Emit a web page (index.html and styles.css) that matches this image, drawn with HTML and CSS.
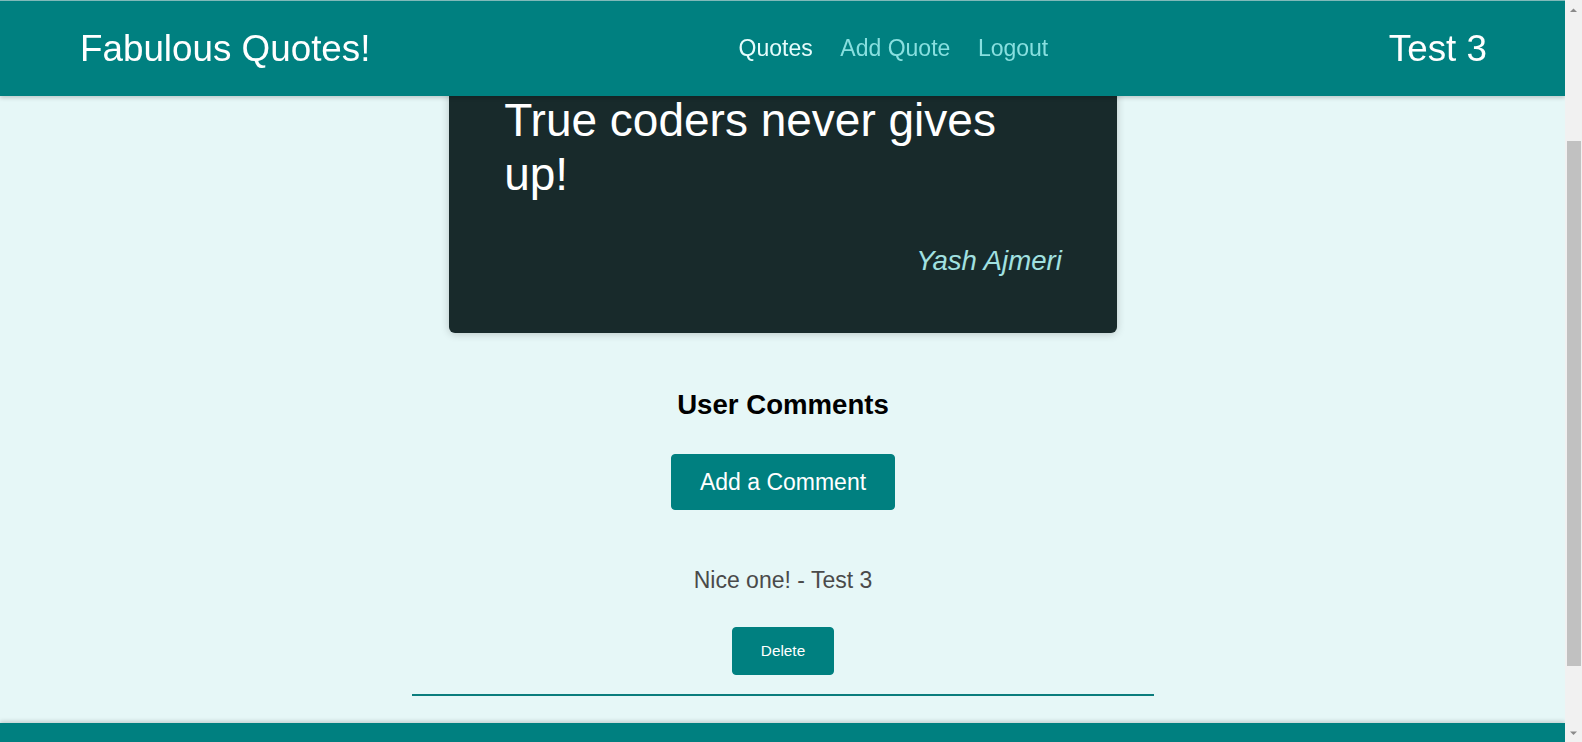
FILE: index.html
```html
<!DOCTYPE html>
<html lang="en">
<head>
<meta charset="utf-8">
<title>Fabulous Quotes!</title>
<link rel="stylesheet" href="styles.css">
</head>
<body>
<header class="header">
  <div class="logo">Fabulous Quotes!</div>
  <nav class="nav">
    <ul class="nav-list">
      <li class="nav-item"><a class="nav-link active" href="#">Quotes</a></li>
      <li class="nav-item"><a class="nav-link" href="#">Add Quote</a></li>
      <li class="nav-item"><a class="nav-link" href="#">Logout</a></li>
    </ul>
  </nav>
  <div class="user">Test 3</div>
</header>
<main class="main">
  <figure class="quote">
    <p class="quote-text">True coders never gives up!</p>
    <figcaption class="quote-author">Yash Ajmeri</figcaption>
  </figure>
  <section class="comments">
    <h2 class="comments-title">User Comments</h2>
    <button class="btn btn-large" type="button">Add a Comment</button>
    <ul class="comment-list">
      <li class="comment">
        <p class="comment-text">Nice one! - Test 3</p>
        <button class="btn btn-small" type="button">Delete</button>
      </li>
    </ul>
  </section>
</main>
<footer class="footer"></footer>
<div class="scrollbar" aria-hidden="true">
  <div class="sb-button">
    <svg class="sb-arrow" width="17" height="17" viewBox="0 0 17 17"><polygon points="5,12 8.5,8.5 12,12"/></svg>
  </div>
  <div class="sb-track">
    <div class="sb-thumb"></div>
  </div>
  <div class="sb-button">
    <svg class="sb-arrow" width="17" height="17" viewBox="0 0 17 17"><polygon points="5,6.5 12,6.5 8.5,10"/></svg>
  </div>
</div>
<script src="script.js"></script>
</body>
</html>
```
FILE: styles.css
```css
* {
  box-sizing: border-box;
}

html {
  font-family: "Liberation Sans", Arial, sans-serif;
  font-size: 18.4px;
}

body {
  margin: 0 17px 0 0;
  background-color: #e6f7f7;
}

.header {
  position: fixed;
  top: 0;
  left: 0;
  right: 17px;
  z-index: 10;
  height: 96px;
  display: flex;
  align-items: center;
  justify-content: space-between;
  padding: 0 78px 0 80px;
  background-color: #008080;
  border-top: 1px solid #80b9b9;
  box-shadow: 0 2px 4px rgba(0, 0, 0, 0.18);
}

.logo {
  font-size: 36.8px;
  color: #ffffff;
}

.nav-list {
  list-style: none;
  margin: 0;
  padding: 0;
  display: flex;
  align-items: baseline;
}

.nav-item {
  margin-left: 27.6px;
  font-size: 23px;
}

.nav-link {
  text-decoration: none;
  color: #88dfdf;
}

.nav-link.active {
  color: #e6fcfc;
}

.user {
  font-size: 36.8px;
  color: #ffffff;
}

.main {
  padding: 112px 0 129px 1px;
}

.quote {
  width: 668px;
  margin: 55.2px auto 56px;
  padding: 55.2px;
  background-color: #182a2b;
  color: #ffffff;
  border-radius: 6px;
  box-shadow: 0 1px 8px rgba(0, 0, 0, 0.2);
}

.quote-text {
  margin: 46px 0 44px;
  font-size: 46px;
}

.quote-author {
  font-size: 27.6px;
  font-style: italic;
  text-align: right;
  color: #a1e1e1;
}

.comments {
  text-align: center;
}

.comments-title {
  margin: 0 0 33.5px;
  font-size: 27.6px;
  color: #000000;
}

.btn {
  cursor: pointer;
  background-color: #008080;
  color: #ffffff;
  border: 1px solid #008080;
  border-radius: 4px;
  font-family: "Liberation Sans", Arial, sans-serif;
  line-height: normal;
}

.btn-large {
  font-size: 23px;
  padding: 13.5px 27.6px;
}

.btn-small {
  font-size: 15.33px;
  padding: 13.8px 27.6px;
}

.comment-list {
  list-style: none;
  margin: 57px auto 0;
  padding: 0 0 19px;
  width: 742px;
  border-bottom: 2px solid #0b7d7d;
}

.comment-text {
  margin: 0 0 33.4px;
  font-size: 23px;
  color: #4a4a4a;
}

.footer {
  position: fixed;
  left: 0;
  right: 17px;
  bottom: 0;
  height: 19px;
  background-color: #008080;
  box-shadow: 0 -2px 4px rgba(0, 0, 0, 0.15);
}

.scrollbar {
  position: fixed;
  top: 0;
  right: 0;
  bottom: 0;
  z-index: 20;
  width: 17px;
  display: flex;
  flex-direction: column;
  background-color: #f1f1f1;
}

.sb-button {
  flex: none;
  height: 17px;
}

.sb-arrow {
  display: block;
  fill: #8a8a8a;
}

.sb-track {
  flex: 1;
  padding-top: 124px;
}

.sb-thumb {
  height: 525px;
  margin: 0 1px 0 2px;
  background-color: #c1c1c1;
}
```
FILE: script.js
```js
window.scrollTo(0, 175);
window.addEventListener("load", function () {
  window.scrollTo(0, 175);
});
```
